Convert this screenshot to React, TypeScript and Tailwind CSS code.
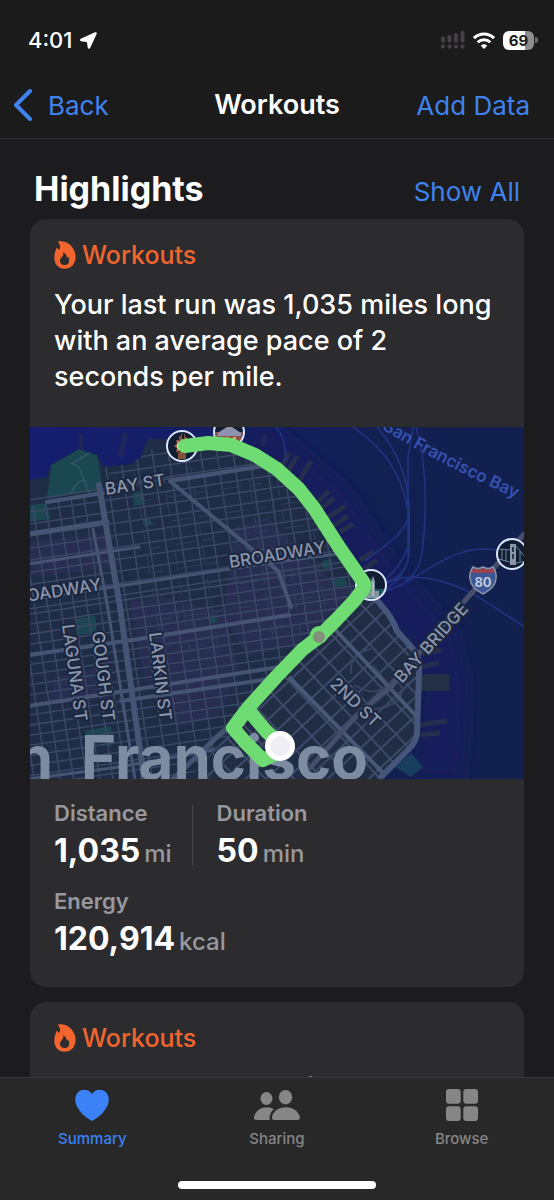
import type { ReactNode } from "react";

const range = (from: number, to: number, step: number) => {
    const out: number[] = [];
    for (let v = from; v <= to; v += step) out.push(v);
    return out;
};

function FlameIcon() {
    return (
        <svg viewBox="0 0 66 84" className="h-7 w-[22px] text-[#f2652f]" fill="currentColor" aria-hidden="true">
            <path
                fillRule="evenodd"
                d="M11 2C28-2 48 6 58 24C66 38 66 50 63 60C58 76 46 83 32 83C14 83 1 70 1 50C1 38 4 30 8 20C10 20 12 23 15 27C21 19 19 10 11 2ZM27 34C30 42 26 45 21 51C14 60 19 72 32 72C46 72 49 58 42 46C41 49 40 50 38 50C38 42 35 37 27 34Z"
            />
        </svg>
    );
}

function StatusBar() {
    return (
        <div className="flex h-[72px] items-center justify-between pr-4 pl-7 pt-2">
            <div className="flex items-center gap-2">
                <span className="text-[22px] font-medium">4:01</span>
                <svg viewBox="0 0 17 17" className="size-[17px]" fill="#fff" stroke="#fff" strokeWidth="2.500" strokeLinejoin="round" aria-hidden="true">
                    <path d="M15.500 1.500L1.300 8L8 9L9 15.600Z" />
                </svg>
            </div>
            <div className="flex items-center gap-2">
                <svg viewBox="0 0 24 18" className="h-[18px] w-6" fill="#434143" aria-label="No signal">
                    <rect x="0" y="5.500" width="4" height="6" rx="1.500" />
                    <rect x="6.500" y="4" width="4" height="7.500" rx="1.500" />
                    <rect x="13" y="2" width="4" height="9.500" rx="1.500" />
                    <rect x="19.500" y="0" width="4" height="11.500" rx="1.500" />
                    <rect x="0" y="13.500" width="4" height="4" rx="1.500" />
                    <rect x="6.500" y="13.500" width="4" height="4" rx="1.500" />
                    <rect x="13" y="13.500" width="4" height="4" rx="1.500" />
                    <rect x="19.500" y="13.500" width="4" height="4" rx="1.500" />
                </svg>
                <svg viewBox="0 0 22 17" className="h-[17px] w-[22px]" fill="none" stroke="#fff" strokeWidth="3" aria-label="Wi-Fi">
                    <path d="M1 6.200A14 14 0 0 1 21 6.200" />
                    <path d="M4.700 10.200A9 9 0 0 1 17.300 10.200" />
                    <path d="M11 17L7.800 13.700A4.500 4.500 0 0 1 14.200 13.700Z" fill="#fff" stroke="none" />
                </svg>
                <div className="flex items-center gap-px">
                    <div className="flex h-[19px] w-[31px] items-center justify-center rounded-md bg-linear-to-r from-white from-70% to-[#8e8d8e] to-70% text-[15px] leading-none font-bold text-[#1c1b1c]">
                        69
                    </div>
                    <div className="h-1.5 w-[3px] rounded-r bg-[#6f6e6f]" />
                </div>
            </div>
        </div>
    );
}

function CardLabel() {
    return (
        <div className="flex items-center gap-1.5 text-[25px] leading-8 font-medium text-[#f2652f]">
            <FlameIcon />
            Workouts
        </div>
    );
}

function PhotoPin({ x, y, children }: { x: number; y: number; children: ReactNode }) {
    return (
        <g transform={`translate(${x} ${y})`}>
            <circle r="15" fill="#101d33" />
            {children}
            <circle r="15" fill="none" stroke="#dbe8ff" strokeWidth="2" />
        </g>
    );
}

const route =
    "M156 19L179 16L202 18L226 28L248 42L270 62L285 81L310 120L335 156L335 161L325 174L307 193L290 210L274 222L247 250L219 281L204 301L217 316L234 333L248 326L250 316L237 304L221 285";

const piers = [
    "M252 42L260 26", "M258 46L268 29", "M270 54L282 34", "M289 75L300 64", "M293 81L305 71",
    "M298 91L316 79", "M304 99L319 89", "M311 105L324 97", "M331 133L345 125", "M336 142L348 133",
    "M390 227L412 223", "M390 240L410 236", "M392 256L420 256", "M390 298L418 294", "M390 308L411 306",
];

// San Francisco, from the marina down to Market Street and SoMa
function RouteMap() {
    return (
        <svg
            viewBox="0 0 496 352"
            preserveAspectRatio="xMidYMid slice"
            className="block h-88 w-full font-[Inter,sans-serif]"
            role="img"
            aria-label="Map of the last run"
        >
            <defs>
                <linearGradient id="bay" x1="0" x2="1">
                    <stop offset="0" stopColor="#151e70" />
                    <stop offset="0.400" stopColor="#151f62" />
                    <stop offset="0.700" stopColor="#122052" />
                    <stop offset="1" stopColor="#12204f" />
                </linearGradient>
                <clipPath id="north">
                    <path d="M0 53L18 50L22 38L50 22L68 28L75 40L102 37L112 30L118 12L148 12L160 20L226 22L262 50L300 100L345 160L204 301L160 352H0Z" />
                </clipPath>
                <clipPath id="soma">
                    <path d="M341 162L352 176L370 202L388 222L392 245L390 306L380 322L352 352H160L204 301Z" />
                </clipPath>
                <filter id="haze" x="-20%" y="-20%" width="140%" height="140%">
                    <feGaussianBlur stdDeviation="8" />
                </filter>
            </defs>

            <rect width="496" height="352" fill="url(#bay)" />
            <path d="M220 10L300 78L355 160L405 215L415 260L410 352" fill="none" stroke="#181f5c" strokeWidth="48" filter="url(#haze)" />
            <path d="M52 6V22M96 6L92 30M236 6L234 20" stroke="#20265c" strokeWidth="5" />

            {/* piers */}
            <g stroke="#252e4c" strokeWidth="5">
                {piers.map((d) => <path key={d} d={d} />)}
            </g>
            <path d="M392 247H420V264H392Z" fill="#243046" />

            {/* ferry lines */}
            <g fill="none" stroke="#233484" strokeWidth="1.500">
                <path d="M324 0C350 18 374 42 380 90V130C376 148 362 156 347 161" />
                <path d="M348 0C372 28 378 54 380 78V118C370 142 362 148 350 158" />
                <path d="M384 0L379 30V134C372 150 366 158 350 166" />
                <path d="M387 0C397 32 398 80 394 118C392 140 384 150 376 154" />
                <path d="M380 90C372 112 352 120 336 134" />
                <path d="M350 166C386 158 412 124 452 122L478 123" />
                <path d="M354 156C390 142 430 156 462 178L496 200" />
                <path d="M247 0Q258 12 256 34" />
            </g>

            <g clipPath="url(#north)">
                <rect width="496" height="352" fill="#1f2c46" />
                <g fill="#2b2f56" opacity="0.700">
                    <path d="M205 100L240 90L275 130L300 150L330 160L270 215L220 230L195 190Z" />
                    <path d="M100 175L135 170L195 185L210 240L190 290L150 300L115 250Z" />
                    <path d="M0 115L80 105L90 140L0 150ZM25 250L70 240L80 270L20 276Z" />
                </g>
                <g fill="#1b4750">
                    <path d="M18 72L22 38L50 22L68 28L74 62Z" />
                    <path d="M0 78L18 76L21 92L0 95ZM103 66L114 64L116 77L105 79ZM46 192L66 189L68 206L48 208ZM56 304L82 299L83 311L58 315ZM77 313H83V319H78ZM113 92L121 90L123 98L115 100ZM292 135L302 132L304 140L294 142ZM304 153L316 150L318 158L306 160ZM180 190L187 188L188 195L182 197Z" />
                </g>
                <g transform="rotate(-8.500)" stroke="#3a4865" strokeWidth="1.500">
                    {range(72, 180, 12).map((y) => <path key={y} d={`M-80 ${y}H400`} />)}
                    {range(46, 70, 12).map((y) => <path key={y} d={`M72 ${y}H400`} />)}
                    {range(185, 430, 10).map((y) => <path key={y} d={`M-80 ${y}H400`} />)}
                    {range(-60, 50, 13).map((x) => <path key={x} d={`M${x} 78V440`} />)}
                    {range(70, 380, 16).map((x) => <path key={x} d={`M${x} 40V440`} />)}
                </g>
                <g transform="rotate(-8.500)" stroke="#313f5c" strokeWidth="1">
                    {range(92, 310, 28).map((x) => <path key={x} d={`M${x + 6} 62V250`} strokeDasharray="14 9 22 12" />)}
                    {range(90, 250, 24).map((y) => <path key={y} d={`M100 ${y}H340`} strokeDasharray="12 16 20 7" />)}
                </g>
                <g fill="none" stroke="#455473" strokeLinecap="round">
                    <path d="M0 107L78 95" strokeWidth="5" />
                    <path d="M70 58L91 180L115 352" strokeWidth="6" />
                    <path d="M64 102L78 176L106 352" strokeWidth="3" />
                    <path d="M141 54L249 144L262 180" strokeWidth="4" />
                    <path d="M18 75L74 66M141 54L235 39" strokeWidth="4" />
                    <path d="M0 173L220 139L330 124" strokeWidth="3" />
                    <path d="M0 228L110 212L260 188" strokeWidth="4" />
                    <path d="M0 279L90 265L250 240M92 274L240 252" strokeWidth="4" />
                    <path d="M0 352L90 340L190 322M0 137L110 120" strokeWidth="3" />
                    <path d="M142 354L190 308L205 296" strokeWidth="5" />
                </g>
                <path d="M42 36L50 40L60 66M42 66Q50 50 58 54M44 36L60 26" fill="none" stroke="#34566a" strokeWidth="1.500" />
            </g>

            <g clipPath="url(#soma)">
                <rect width="496" height="352" fill="#202d44" />
                <g transform="translate(341 162) rotate(-43)" stroke="#3d4b68" strokeWidth="2">
                    {range(12, 300, 14).map((y) => <path key={y} d={`M-300 ${y}H200`} />)}
                    {range(-290, 160, 21).map((x) => <path key={x} d={`M${x} 0V300`} />)}
                </g>
                <g fill="none" stroke="#36445f" strokeWidth="2">
                    <path d="M322 247Q320 226 342 222M325 258Q350 272 358 256L344 238" />
                    <path d="M345 282Q370 280 374 262L366 250" />
                </g>
                <path d="M260 250L360 352M300 196L388 290" stroke="#4a5877" strokeWidth="4" />
            </g>
            <path d="M341 164C352 180 362 186 368 204L384 222Q391 230 390 246L388 304Q388 314 380 322L350 352" fill="none" stroke="#46557a" strokeWidth="6" />
            <path d="M280 342L330 286L362 260L400 214L496 106" fill="none" stroke="#454f6b" strokeWidth="5" />
            <path d="M366 340L382 326L394 340L382 350Z" fill="#173e5c" />

            <g fontSize="60" fontWeight="700" fill="#7e8ca2" textAnchor="end">
                <text x="24" y="352">San</text>
                <text x="339" y="352">Francisco</text>
            </g>

            {/* street names */}
            <g fontSize="17" fontWeight="500" fill="#8b95a9" stroke="#1b2740" strokeWidth="4" strokeLinejoin="round" paintOrder="stroke">
                <text transform="translate(77 68) rotate(-9)">BAY ST</text>
                <text transform="translate(201 141) rotate(-9)">BROADWAY</text>
                <text transform="translate(73 163) rotate(-9)" textAnchor="end">BROADWAY</text>
                <text transform="translate(33 198) rotate(82)">LAGUNA ST</text>
                <text transform="translate(63 205) rotate(83)">GOUGH ST</text>
                <text transform="translate(120 206) rotate(83)">LARKIN ST</text>
                <text transform="translate(300 258) rotate(44)">2ND ST</text>
                <text transform="translate(373 257) rotate(-48)">BAY BRIDGE</text>
            </g>
            <path id="bay-name" d="M353 2Q410 37 510 82" fill="none" />
            <text fontSize="17" fontWeight="600" fill="#3552b0">
                <textPath href="#bay-name">San Francisco Bay</textPath>
            </text>

            {/* interstate shield */}
            <g transform="translate(454 153)">
                <path d="M-10-13Q-5-10 0-13Q5-10 10-13Q14-7 13-1C12 7 6 11 0 14C-6 11-12 7-13-1Q-14-7-10-13Z" fill="#3c5797" stroke="#8a93a8" strokeWidth="1.500" />
                <path d="M-9.500-12Q-5-9.500 0-12Q5-9.500 9.500-12L12-7H-12Z" fill="#9b4250" />
                <text y="7" textAnchor="middle" fontSize="13" fontWeight="700" fill="#c3cad8">80</text>
            </g>

            <PhotoPin x={153} y={19}>
                <path d="M-3-10H-1V-13H0V-6H2V-12H3V-9H5V-2H-5V-6H-3ZM-4 6H4V13H-4Z" fill="#80513a" />
                <path d="M0-8L2-4L6-6L5-2L8 0L5 2L6 6L2 5L0 8L-2 5L-6 6L-5 2L-8 0L-5-2L-6-6L-2-4Z" fill="#b06a4a" />
                <circle r="5" fill="#f4e3cc" />
                <circle r="2" fill="#ec8b2c" />
            </PhotoPin>
            <PhotoPin x={200} y={5}>
                <path d="M-14 0H14L12 9H-12Z" fill="#8b5247" />
                <path d="M-10 0L-2-5L3-5L12 1V4H-12Z" fill="#8f92ae" />
                <path d="M-9 5H-6V9H-9ZM-3 5H0V9H-3ZM4 5H7V9H4Z" fill="#efa15f" />
            </PhotoPin>
            <PhotoPin x={342} y={158}>
                <path d="M14 4A14 14 0 0 1-8 12L-4 4Z" fill="#1d5468" />
                <path d="M0 13V-4L2-9L4-4V13ZM-5 6H8V13H-5Z" fill="#8194a0" />
                <path d="M2-3V11" stroke="#d2dad4" />
            </PhotoPin>
            <PhotoPin x={483} y={127}>
                <path d="M-2-10H4V11H-2Z" fill="#8a98a5" />
                <path d="M0-7H2V-2H0ZM0 0H2V5H0Z" fill="#24374f" />
                <path d="M-14-5L-2-4M4-8L13 3M-14 5L-2 8M4 9L14 7M-10-4V6M-6-4V7M8-3V7" stroke="#6e879e" fill="none" />
            </PhotoPin>

            <path d={route} fill="none" stroke="#6edc72" strokeWidth="14" strokeLinecap="round" strokeLinejoin="round" />
            <circle cx="290" cy="208" r="9" fill="#6edc72" />
            <circle cx="290" cy="210" r="6" fill="#84907b" />
            <circle cx="251" cy="319" r="15" fill="#fff" />
            <circle cx="251" cy="319" r="10" fill="#f0eef5" />
        </svg>
    );
}

function Stat({ label, value, unit }: { label: string; value: string; unit: string }) {
    return (
        <div>
            <dt className="text-[22px] leading-7 font-semibold text-[#98989f]">{label}</dt>
            <dd className="mt-1 flex items-baseline gap-1 leading-10">
                <span className="text-[32px] font-bold">{value}</span>
                <span className="text-2xl font-medium text-[#98989f]">{unit}</span>
            </dd>
        </div>
    );
}

function HeartIcon() {
    return (
        <svg viewBox="0 0 34 32" className="h-8 w-[34px]" fill="currentColor" aria-hidden="true">
            <path d="M17 5C14 .5 8.500-.3 4.500 2C0 5 -.8 11 1.500 16.500C4.500 23 10 28 16 31.500Q17 32 18 31.500C24 28 29.500 23 32.500 16.500C34.800 11 34 5 29.500 2C25.500-.3 20 .5 17 5Z" />
        </svg>
    );
}

function PeopleIcon() {
    return (
        <svg viewBox="0 0 46 32" className="h-8 w-[46px]" fill="currentColor" aria-hidden="true">
            <ellipse cx="12.500" cy="9.500" rx="6" ry="6.500" />
            <ellipse cx="31.500" cy="8.200" rx="6.700" ry="7.200" />
            <path d="M2.500 31C.7 31 0 30 0 28.800C.5 23 6 18.300 12.500 18.300Q17 18.300 20 20C17.500 22 15.500 25.500 15.500 28.800Q15.500 30 16 31Z" />
            <path d="M20.500 31C18.700 31 17.800 30 17.800 28.800C18.500 23 24 18.300 31.800 18.300C39.500 18.300 45.200 23 46 28.800C46 30 45 31 43.500 31Z" />
        </svg>
    );
}

function GridIcon() {
    return (
        <svg viewBox="0 0 32 32" className="size-8" fill="currentColor" aria-hidden="true">
            <rect width="14.700" height="14.700" rx="3" />
            <rect x="17.300" width="14.700" height="14.700" rx="3" />
            <rect y="17.300" width="14.700" height="14.700" rx="3" />
            <rect x="17.300" y="17.300" width="14.700" height="14.700" rx="3" />
        </svg>
    );
}

const tabs = [
    { label: "Summary", icon: <HeartIcon />, active: true },
    { label: "Sharing", icon: <PeopleIcon />, active: false },
    { label: "Browse", icon: <GridIcon />, active: false },
];

export default function App() {
    return (
        <div className="flex h-screen flex-col bg-[#1c1c1e] font-[Inter,sans-serif] text-white">
            <header className="shrink-0 border-b border-[#313133] bg-[#1c1b1c]">
                <StatusBar />
                <div className="grid h-[66px] grid-cols-[1fr_auto_1fr] items-center px-3 text-[26px]">
                    <button className="flex items-center gap-4 text-[#3f83f0]">
                        <svg viewBox="0 0 20 34" className="h-[34px] w-5" fill="none" stroke="currentColor" strokeWidth="4" strokeLinecap="round" strokeLinejoin="round" aria-hidden="true">
                            <path d="M18 3L4 17L18 31" />
                        </svg>
                        Back
                    </button>
                    <h1 className="text-[27px] font-semibold">Workouts</h1>
                    <button className="mr-3 justify-self-end text-[#3f83f0]">Add Data</button>
                </div>
            </header>

            <main className="min-h-0 flex-1 overflow-hidden px-[30px] pt-7">
                <div className="flex items-center justify-between px-1">
                    <h2 className="text-[34px] leading-[44px] font-bold">Highlights</h2>
                    <button className="pt-1 text-[26px] text-[#3f83f0]">Show All</button>
                </div>

                <article className="mt-2 overflow-hidden rounded-2xl bg-[#2c2c2e]">
                    <div className="px-6 pt-5 pb-8">
                        <CardLabel />
                        <p className="mt-4 text-[27px] leading-9 font-medium">
                            Your last run was 1,035 miles long with an average pace of 2 seconds per mile.
                        </p>
                    </div>
                    <RouteMap />
                    <dl className="flex flex-col gap-4 px-6 pt-5 pb-7">
                        <div className="flex">
                            <Stat label="Distance" value="1,035" unit="mi" />
                            <div className="my-1.5 mr-6 ml-5 w-px bg-[#48484a]" />
                            <Stat label="Duration" value="50" unit="min" />
                        </div>
                        <Stat label="Energy" value="120,914" unit="kcal" />
                    </dl>
                </article>

                <article className="mt-[15px] rounded-2xl bg-[#2c2c2e] px-6 pt-5 pb-8">
                    <CardLabel />
                    <p className="mt-4 text-[27px] leading-9 font-medium">You ran the last lap in a record time.</p>
                </article>
            </main>

            <nav className="shrink-0 border-t border-[#38383b] bg-[#282828] pb-[11px]">
                <div className="grid grid-cols-3">
                    {tabs.map((tab) => (
                        <button
                            key={tab.label}
                            className={`flex flex-col items-center gap-2 pt-[11px] text-[15px] leading-5 font-medium ${tab.active ? "text-[#3b82f6]" : "text-[#868686]"}`}
                        >
                            {tab.icon}
                            {tab.label}
                        </button>
                    ))}
                </div>
                <div className="mx-auto mt-8 h-2 w-[198px] rounded-full bg-white" />
            </nav>
        </div>
    );
}
